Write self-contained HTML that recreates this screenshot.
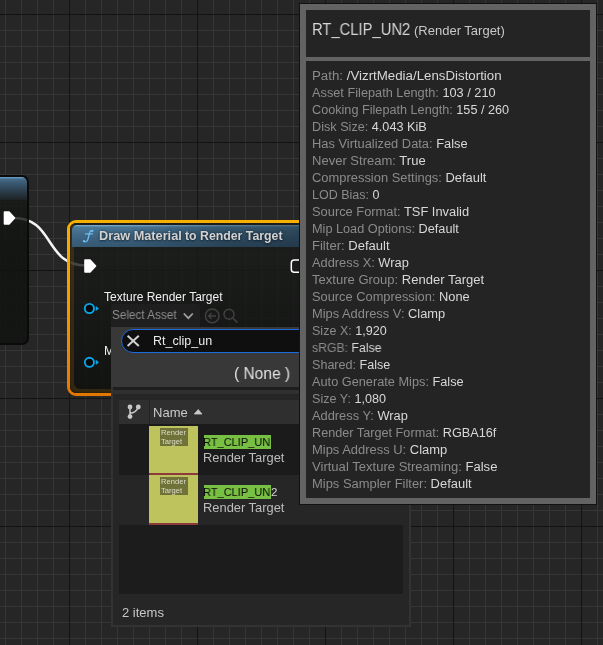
<!DOCTYPE html>
<html><head><meta charset="utf-8">
<style>
*{margin:0;padding:0;box-sizing:border-box}
html,body{width:603px;height:645px;overflow:hidden;background:#262626}
body{position:relative;font-family:"Liberation Sans",sans-serif;}
.a{position:absolute}
.t{position:absolute;white-space:nowrap;line-height:1;transform-origin:0 0;will-change:transform}
#grid{left:0;top:0;width:603px;height:645px;
background-image:
linear-gradient(to right,#141414 1px,transparent 1px),
linear-gradient(to bottom,#141414 1px,transparent 1px),
linear-gradient(to right,#363636 1px,transparent 1px),
linear-gradient(to bottom,#363636 1px,transparent 1px);
background-size:128px 128px,128px 128px,16px 16px,16px 16px;
background-position:69px 14px,69px 14px,5px 14px,5px 14px;
}
.tt{left:312px;font-size:12.5px;color:#8b8b8b}
.tt b{font-weight:normal;color:#d8d8d8}
</style></head><body>
<div id="grid" class="a"></div>

<!-- wire (behind nodes) -->
<svg class="a" style="left:0;top:0" width="603" height="645">
  <path d="M14 218 C 54.5 218, 44.5 265.5, 86 265.5" stroke="#f4f4f4" stroke-width="2.5" fill="none"/>
</svg>

<!-- left node -->
<div class="a" style="left:-20px;top:175px;width:49px;height:170px;border-radius:7px;background:linear-gradient(rgba(26,28,26,0.8),rgba(16,18,16,0.84) 40%);border:2px solid rgba(8,8,8,0.85);overflow:hidden">
  <div class="a" style="left:0;top:0;width:100%;height:23px;border-radius:5px 5px 0 0;background:linear-gradient(#6898c0 0px,#6898c0 1px,#466c8a 1.8px,#3a5a72 25%,#2e4252 55%,#243038 80%,#1f2326)"></div>
</div>
<svg class="a" style="left:0;top:0" width="40" height="240">
  <path d="M4.5 212 L9 212 L14.5 218 L9 224 L4.5 224 Z" fill="#fff" stroke="#fff" stroke-width="1.6" stroke-linejoin="round"/>
</svg>

<!-- Draw material node -->
<svg class="a" style="left:0;top:0" width="400" height="400"><defs><linearGradient id="og" x1="0" y1="0" x2="0" y2="1"><stop offset="0" stop-color="#f5b000"/><stop offset="0.5" stop-color="#f09a00"/><stop offset="1" stop-color="#e27800"/></linearGradient></defs>
<rect x="68.5" y="221.5" width="300" height="173" rx="7.5" ry="7.5" fill="none" stroke="url(#og)" stroke-width="3"/></svg>
<div class="a" style="left:70px;top:223px;width:300px;height:170px;border-radius:6px;background:linear-gradient(rgba(24,26,24,0.8),rgba(24,26,24,0.8) 20%,rgba(13,15,13,0.84));overflow:hidden;box-shadow:inset 4px -4px 0 rgba(120,80,10,0.33), inset 1px -1px 0 rgba(0,0,0,0.5)">
  <div class="a" style="left:2px;top:2px;width:228px;height:22px;border-radius:5px 0 0 0;background:linear-gradient(to right,rgba(0,0,0,0) 0px,rgba(0,0,0,0.06) 60px,rgba(8,12,16,0.3) 150px,rgba(8,12,16,0.42) 228px),linear-gradient(#7aaacc 0px,#7aaacc 1px,#4f7e9e 1.7px,#456f8e 30%,#3b6280 65%,#365a74)"></div>
</div>
<svg class="a" style="left:0;top:0" width="110" height="250">
  <path d="M92.6 231.2 C 91.4 230.2, 90.1 230.6, 89.7 232.5 L 87.9 239.3 C 87.4 241.4, 85.6 242.4, 83.8 241.4" stroke="#70c0f8" stroke-width="1.25" fill="none" stroke-linecap="round"/>
  <circle cx="92.2" cy="230.9" r="1.15" fill="#70c0f8"/><circle cx="83.9" cy="241.1" r="1.1" fill="#70c0f8"/>
  <path d="M85 233.9 L 93 233.9" stroke="#70c0f8" stroke-width="1.15"/>
</svg>
<div class="t" style="left:98.9px;top:229.5px;font-size:12.3px;font-weight:bold;color:#d2d2d2;text-shadow:0 0 3px rgba(10,20,30,0.6),0 1px 2px rgba(0,0,0,0.4);transform:scaleX(1.035)">Draw Material</div>
<div class="t" style="left:185.2px;top:229.5px;font-size:12.3px;font-weight:bold;color:#d2d2d2;text-shadow:0 0 3px rgba(10,20,30,0.6),0 1px 2px rgba(0,0,0,0.4)">to Render Target</div>

<!-- node exec pins -->
<svg class="a" style="left:0;top:0" width="320" height="400">
  <path d="M85 260 L90 260 L95.6 266 L90 272 L85 272 Z" fill="#fff" stroke="#fff" stroke-width="1.6" stroke-linejoin="round"/>
  <path d="M302 260 L294.3 260 Q291.3 260 291.3 263 L291.3 269.2 Q291.3 272.2 294.3 272.2 L302 272.2" fill="none" stroke="#fff" stroke-width="1.5"/>
  <circle cx="89.4" cy="308.5" r="4.6" fill="#080808" stroke="#0aa6ea" stroke-width="1.9"/>
  <path d="M95.8 305.9 L99 308.5 L95.8 311.1 Z" fill="#0aa6ea"/>
  <circle cx="89.4" cy="362.3" r="4.6" fill="#080808" stroke="#0aa6ea" stroke-width="1.9"/>
  <path d="M95.8 359.7 L99 362.3 L95.8 364.9 Z" fill="#0aa6ea"/>
</svg>
<div class="t" style="left:104px;top:290.5px;font-size:12px;color:#f0f0f0;transform:scaleX(1.0)">Texture Render Target</div>
<div class="t" style="left:104px;top:345px;font-size:12.3px;color:#f0f0f0">M</div>

<!-- select asset combo -->
<div class="a" style="left:111px;top:304px;width:89px;height:26px;border-radius:3px;background:#1f1f1f"></div>
<div class="t" style="left:112px;top:309px;font-size:12px;color:#8e8e8e;transform:scaleX(0.977)">Select Asset</div>
<svg class="a" style="left:0;top:0" width="260" height="340">
  <path d="M183.8 313.5 L188.3 318.2 L192.8 313.5" stroke="#a0a0a0" stroke-width="1.8" fill="none"/>
  <circle cx="212.2" cy="315.9" r="6.8" fill="none" stroke="#404040" stroke-width="1.5"/>
  <path d="M216 315.9 L208.6 315.9 M211.5 313 L208.6 315.9 L211.5 318.8" stroke="#404040" stroke-width="1.5" fill="none"/>
  <circle cx="229" cy="314.2" r="5" fill="none" stroke="#404040" stroke-width="1.5"/>
  <path d="M232.8 318 L237.4 322.6" stroke="#404040" stroke-width="1.6"/>
</svg>

<!-- dropdown panel -->
<div class="a" style="left:111px;top:327px;width:300px;height:300px;background:#262626;border:2px solid #333;border-top:0"></div>
<div class="a" style="left:111px;top:327px;width:300px;height:60px;background:#383838"></div>
<div class="a" style="left:113px;top:387px;width:296px;height:3px;background:#1e1e1e"></div>
<div class="a" style="left:113px;top:390px;width:296px;height:4px;background:#303030"></div>
<!-- search pill -->
<div class="a" style="left:121px;top:329px;width:260px;height:24px;border-radius:12px;background:#0f0f0f;border:1.8px solid #1a6ce0"></div>
<svg class="a" style="left:0;top:0" width="160" height="360">
  <path d="M127.6 335.8 L138.8 346 M138.8 335.8 L127.6 346" stroke="#d0d0d0" stroke-width="2"/>
</svg>
<div class="t" style="left:153px;top:334.5px;font-size:12.4px;color:#ececec;transform:scaleX(1.01)">Rt_clip_un</div>
<div class="t" style="left:233.5px;top:366.3px;font-size:16px;color:#e2e2e2;transform:scaleX(0.97)">( None )</div>

<!-- list header -->
<div class="a" style="left:119px;top:400px;width:284px;height:24px;background:#2f2f2f"></div>
<div class="a" style="left:149px;top:400px;width:1px;height:24px;background:#242424"></div>
<svg class="a" style="left:0;top:0" width="220" height="430">
  <circle cx="130" cy="407" r="2.4" fill="#c8c8c8"/>
  <circle cx="138.3" cy="407" r="2.4" fill="#c8c8c8"/>
  <circle cx="130" cy="416.6" r="2.4" fill="#c8c8c8"/>
  <path d="M130 407 L130 416.6 M130 413.2 Q136 413.2 138.3 407" stroke="#c8c8c8" stroke-width="1.5" fill="none"/>
  <path d="M194.3 414 L198.2 409.6 L202 414 Z" fill="#c8c8c8" stroke="#c8c8c8" stroke-width="0.8" stroke-linejoin="round"/>
</svg>
<div class="t" style="left:153px;top:407px;font-size:12.4px;color:#cacaca;transform:scaleX(1.05)">Name</div>

<!-- rows -->
<div class="a" style="left:119px;top:424px;width:284px;height:51px;background:#1b1b1b"></div>
<div class="a" style="left:119px;top:524.5px;width:284px;height:69.5px;background:#1c1c1c"></div>

<div class="a" style="left:149px;top:426px;width:49px;height:49px;background:#bec35e;border-bottom:2px solid #8c3a3c"></div>
<div class="a" style="left:160px;top:428px;width:28px;height:18px;background:#6f733a"></div>
<div class="t" style="left:161px;top:429px;font-size:7.6px;line-height:8.6px;color:#dedcc8">Render<br>Target</div>
<div class="a" style="left:149px;top:475px;width:49px;height:50px;background:#bec35e;border-bottom:2px solid #8c3a3c"></div>
<div class="a" style="left:160px;top:477px;width:28px;height:18px;background:#6f733a"></div>
<div class="t" style="left:161px;top:478px;font-size:7.6px;line-height:8.6px;color:#dedcc8">Render<br>Target</div>

<div class="a" style="left:204px;top:435px;width:67px;height:14px;background:#78c043"></div>
<div class="t" style="left:203px;top:436px;font-size:11.6px;color:#0a0a0a;transform:scaleX(0.951)">RT_CLIP_UN</div>
<div class="t" style="left:203px;top:452.2px;font-size:12.4px;color:#bdbdbd;transform:scaleX(1.04)">Render Target</div>

<div class="a" style="left:204px;top:485px;width:67px;height:14px;background:#78c043"></div>
<div class="t" style="left:203px;top:486px;font-size:11.6px;color:#0a0a0a;transform:scaleX(0.951)">RT_CLIP_UN</div>
<div class="t" style="left:271px;top:486px;font-size:11.6px;color:#d0d0d0">2</div>
<div class="t" style="left:203px;top:502.2px;font-size:12.4px;color:#bdbdbd;transform:scaleX(1.04)">Render Target</div>

<div class="t" style="left:121.8px;top:606px;font-size:13px;color:#c8c8c8">2 items</div>

<!-- tooltip -->
<div class="a" style="left:299px;top:3px;width:298px;height:502px;background:#636363;border:1px solid #121212"></div>
<div class="a" style="left:306px;top:10px;width:284px;height:47px;background:#242424"></div>
<div class="a" style="left:306px;top:61px;width:284px;height:437px;background:#242424"></div>
<div class="t" style="left:311.5px;top:21px;font-size:16.5px;color:#d6d6d6;transform:scaleX(0.895)">RT_CLIP_UN2</div>
<div class="t" style="left:414px;top:23.5px;font-size:13px;color:#c8c8c8">(Render Target)</div>

<div class="t tt" style="top:69.5px;transform:scaleX(1.063)">Path: <b>/VizrtMedia/LensDistortion</b></div>
<div class="t tt" style="top:86.5px;transform:scaleX(1.02)">Asset Filepath Length: <b>103 / 210</b></div>
<div class="t tt" style="top:103.5px;transform:scaleX(1.013)">Cooking Filepath Length: <b>155 / 260</b></div>
<div class="t tt" style="top:120.5px;transform:scaleX(1.013)">Disk Size: <b>4.043 KiB</b></div>
<div class="t tt" style="top:137.5px;transform:scaleX(1.029)">Has Virtualized Data: <b>False</b></div>
<div class="t tt" style="top:154.5px;transform:scaleX(1.042)">Never Stream: <b>True</b></div>
<div class="t tt" style="top:171.5px;transform:scaleX(1.033)">Compression Settings: <b>Default</b></div>
<div class="t tt" style="top:188.5px;transform:scaleX(1.0)">LOD Bias: <b>0</b></div>
<div class="t tt" style="top:205.5px;transform:scaleX(1.029)">Source Format: <b>TSF Invalid</b></div>
<div class="t tt" style="top:222.5px;transform:scaleX(1.016)">Mip Load Options: <b>Default</b></div>
<div class="t tt" style="top:239.5px;transform:scaleX(1.044)">Filter: <b>Default</b></div>
<div class="t tt" style="top:256.5px;transform:scaleX(1.027)">Address X: <b>Wrap</b></div>
<div class="t tt" style="top:273.5px;transform:scaleX(1.043)">Texture Group: <b>Render Target</b></div>
<div class="t tt" style="top:290.5px;transform:scaleX(1.027)">Source Compression: <b>None</b></div>
<div class="t tt" style="top:307.5px;transform:scaleX(1.029)">Mips Address V: <b>Clamp</b></div>
<div class="t tt" style="top:324.5px;transform:scaleX(1.004)">Size X: <b>1,920</b></div>
<div class="t tt" style="top:341.5px;transform:scaleX(0.979)">sRGB: <b>False</b></div>
<div class="t tt" style="top:358.5px;transform:scaleX(1.006)">Shared: <b>False</b></div>
<div class="t tt" style="top:375.5px;transform:scaleX(1.02)">Auto Generate Mips: <b>False</b></div>
<div class="t tt" style="top:392.5px;transform:scaleX(1.007)">Size Y: <b>1,080</b></div>
<div class="t tt" style="top:409.5px;transform:scaleX(1.027)">Address Y: <b>Wrap</b></div>
<div class="t tt" style="top:426.5px;transform:scaleX(1.014)">Render Target Format: <b>RGBA16f</b></div>
<div class="t tt" style="top:443.5px;transform:scaleX(1.035)">Mips Address U: <b>Clamp</b></div>
<div class="t tt" style="top:460.5px;transform:scaleX(1.045)">Virtual Texture Streaming: <b>False</b></div>
<div class="t tt" style="top:477.5px;transform:scaleX(1.035)">Mips Sampler Filter: <b>Default</b></div>

</body></html>
